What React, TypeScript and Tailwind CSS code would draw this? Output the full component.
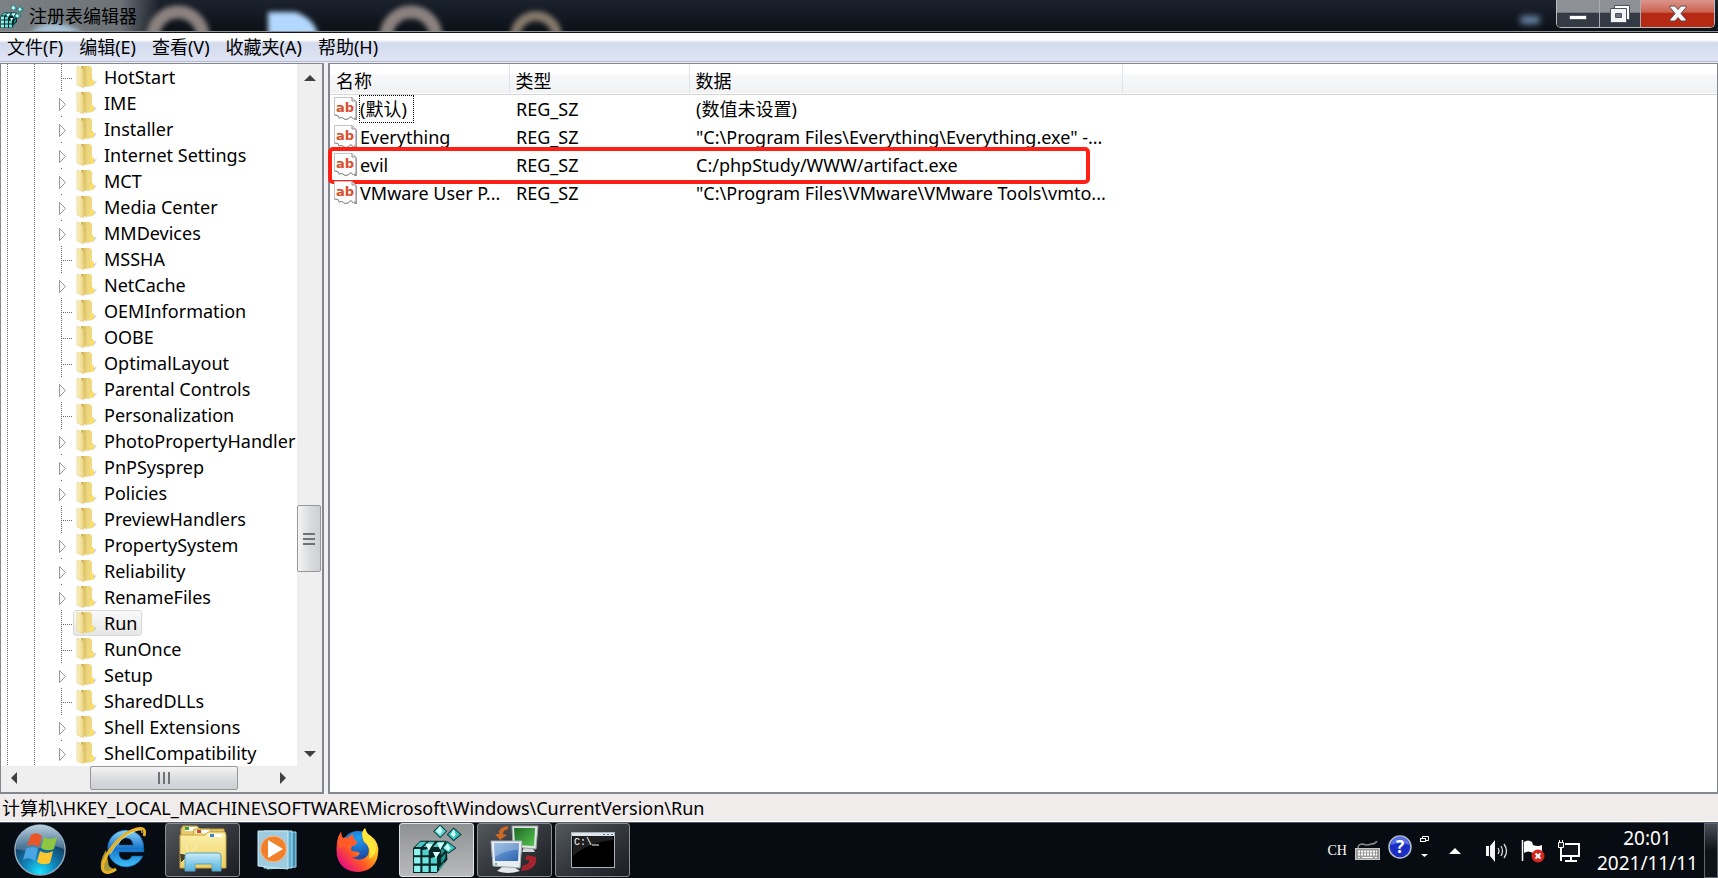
import React from "react";

const treeKeys: { name: string; expandable?: boolean; selected?: boolean }[] = [
  { name: "HotStart" },
  { name: "IME", expandable: true },
  { name: "Installer", expandable: true },
  { name: "Internet Settings", expandable: true },
  { name: "MCT", expandable: true },
  { name: "Media Center", expandable: true },
  { name: "MMDevices", expandable: true },
  { name: "MSSHA" },
  { name: "NetCache", expandable: true },
  { name: "OEMInformation" },
  { name: "OOBE" },
  { name: "OptimalLayout" },
  { name: "Parental Controls", expandable: true },
  { name: "Personalization" },
  { name: "PhotoPropertyHandler", expandable: true },
  { name: "PnPSysprep", expandable: true },
  { name: "Policies", expandable: true },
  { name: "PreviewHandlers" },
  { name: "PropertySystem", expandable: true },
  { name: "Reliability", expandable: true },
  { name: "RenameFiles", expandable: true },
  { name: "Run", selected: true },
  { name: "RunOnce" },
  { name: "Setup", expandable: true },
  { name: "SharedDLLs" },
  { name: "Shell Extensions", expandable: true },
  { name: "ShellCompatibility", expandable: true },
];

const values = [
  { name: "(默认)", type: "REG_SZ", data: "(数值未设置)", focused: true },
  { name: "Everything", type: "REG_SZ", data: '"C:\\Program Files\\Everything\\Everything.exe" -...' },
  { name: "evil", type: "REG_SZ", data: "C:/phpStudy/WWW/artifact.exe", marked: true },
  { name: "VMware User P...", type: "REG_SZ", data: '"C:\\Program Files\\VMware\\VMware Tools\\vmto...' },
];

const menus = ["文件(F)", "编辑(E)", "查看(V)", "收藏夹(A)", "帮助(H)"];

function RegeditIcon({ className }: { className?: string }) {
  return (
    <svg viewBox="0 0 48 48" className={className} aria-hidden="true">
      <path d="M1 22 L8 15 H33 L34 33 L24 46 H1 Z" fill="#042625" />
      {/* front face */}
      <path d="M2 23 H8 V29 H2 Z M2 31 H8 V37 H2 Z M2 39 H8 V45 H2 Z" fill="#8ff3ef" />
      <path d="M10 31 H16 V37 H10 Z M10 39 H16 V45 H10 Z M18 39 H24 V45 H18 Z" fill="#6fe4e0" />
      <path d="M10 24 L16 23 V29 H10 Z M18 32 L24 30 V37 H18 Z" fill="#53cfcc" />
      {/* top faces */}
      <path d="M3 21 L8 16 H14 L9 21 Z M11 21 L16 16 H22 L18 21 Z M20 21 L25 16 H32 L27 21 Z" fill="#49c6c3" />
      <path d="M13 18 H20 L16 25 Z M24 17 H31 L27 24 Z M20 26 H27 L23 32 Z" fill="#d4fffc" />
      {/* side faces */}
      <path d="M28 24 L32 19 V24 L28 29 Z M28 32 L32 27 V32 L28 37 Z M26 41 L31 35 V37 L26 44 Z" fill="#1e9a97" />
      <g stroke="#063f3f">
        <path d="M27 0 L33 6 L27 12 L21 6 Z" fill="#5cd6d3" />
        <path d="M40 3 L47 9 L40 15 L34 9 Z" fill="#3bbdbb" />
        <path d="M34 16 L42 22 L35 27 L29 22 Z" fill="#43c5c3" />
      </g>
      <path d="M27 1 L29 6 L27 9 L23 6 Z M40 4 L42 9 L40 12 L37 9 Z M34 18 L37 22 L35 25 L31 22 Z" fill="#cbfffc" />
    </svg>
  );
}

function FolderIcon() {
  return (
    <svg width="22" height="24" viewBox="0 0 22 24" className="shrink-0" aria-hidden="true">
      <defs>
        <linearGradient id="folderBack" x1="0" x2="1">
          <stop offset="0" stopColor="#cfae48" />
          <stop offset="0.5" stopColor="#ecd682" />
          <stop offset="1" stopColor="#f3dc7c" />
        </linearGradient>
        <linearGradient id="folderFront" x1="0" x2="1">
          <stop offset="0" stopColor="#fbf2c3" />
          <stop offset="1" stopColor="#ecd27c" />
        </linearGradient>
      </defs>
      <path d="M12 22 L21 15 L18 20 Z" fill="#9c9c9c" opacity="0.6" />
      <path d="M5 1 H14 L16 3 V14 L18 15 V20 L10 22 L6 20 Z" fill="url(#folderBack)" />
      <path d="M14 15 H18 V20 L14 21 Z" fill="#f9e06a" />
      <path d="M1 1 L7 4 L8 23 L1 20 Z" fill="url(#folderFront)" stroke="#e4cd80" strokeWidth="0.6" />
    </svg>
  );
}

function StringValueIcon() {
  return (
    <svg width="24" height="24" viewBox="0 0 24 24" className="shrink-0" aria-hidden="true">
      <path d="M19 1 L23 5 V23 H20 V20 Z" fill="#9a9a9a" />
      <path d="M0.5 0.5 H18 L21.5 4 V20 L19 22 L17 19.5 L14 22 L11 22.5 L8 20.5 L5 21 L4 18.5 L0.5 18 Z" fill="#fdfdfd" stroke="#c4c4c4" />
      <path d="M0.5 18 L4 18.5 L5 21 L8 20.5 L11 22.5 L14 22 L17 19.5 L19 22" fill="none" stroke="#8d8d8d" />
      <path d="M18 0.5 V4 H21.5" fill="none" stroke="#8d8d8d" />
      <text x="2" y="15" fontFamily="DejaVu Sans" fontWeight="700" fontSize="13" fill="#d9502e">
        ab
      </text>
    </svg>
  );
}

function TreeItem({ item }: { item: (typeof treeKeys)[number] }) {
  return (
    <li className="flex h-[26px] items-center whitespace-nowrap">
      <svg width="72" height="26" viewBox="0 0 72 26" className="shrink-0" aria-hidden="true">
        <path d="M6.5 0 V26 M33.5 0 V26" stroke="#666" strokeDasharray="1 1" />
        {item.expandable ? (
          <>
            <path d="M60.5 0 V1" stroke="#666" />
            <path d="M58.5 8.5 L64.5 14.5 L58.5 20.5 Z" fill="#fff" stroke="#969696" />
            <path d="M72 14.5 H76" stroke="#666" strokeDasharray="1 1" />
          </>
        ) : (
          <>
            <path d="M60.5 0 V26" stroke="#666" strokeDasharray="1 1" />
            <path d="M62 14.5 H72" stroke="#666" strokeDasharray="1 1" />
          </>
        )}
      </svg>
      <button
        className={
          item.selected
            ? "flex h-[26px] items-center gap-[6px] rounded-[3px] border border-[#d9d9d9] bg-linear-to-b from-[#fafafa] to-[#e6e6e6] pr-1 pl-[2px]"
            : "flex h-[26px] items-center gap-[6px] border border-transparent pr-1 pl-[2px]"
        }
      >
        <FolderIcon />
        <span>{item.name}</span>
      </button>
    </li>
  );
}

function ScrollArrow({ d, label, className }: { d: string; label: string; className: string }) {
  return (
    <button aria-label={label} className={`flex shrink-0 items-center justify-center ${className}`}>
      <svg width="12" height="12" viewBox="0 0 12 12" aria-hidden="true">
        <path d={d} fill="#404040" />
      </svg>
    </button>
  );
}

function TreePane() {
  return (
    <nav className="flex w-[324px] shrink-0 flex-col border-2 border-t border-l border-[#828790] bg-white">
      <div className="flex min-h-0 flex-1">
        <ul className="min-w-0 flex-1 overflow-hidden">
          {treeKeys.map((item) => (
            <TreeItem key={item.name} item={item} />
          ))}
        </ul>
        <div className="flex w-[25px] shrink-0 flex-col bg-[#efefef]">
          <ScrollArrow d="M0 9 L6 3 L12 9 Z" label="向上滚动" className="h-[28px]" />
          <div className="flex-[413]" />
          <div className="mr-px flex h-[67px] flex-col items-center justify-center gap-[3px] rounded-[2px] border border-[#979797] bg-linear-to-r from-[#f4f4f4] via-[#dcdde0] to-[#cfd0d4]">
            <span className="h-[2px] w-3 bg-[#6f7276]" />
            <span className="h-[2px] w-3 bg-[#6f7276]" />
            <span className="h-[2px] w-3 bg-[#6f7276]" />
          </div>
          <div className="flex-[169]" />
          <ScrollArrow d="M0 3 L6 9 L12 3 Z" label="向下滚动" className="h-[25px]" />
        </div>
      </div>
      <div className="flex h-[26px] shrink-0 bg-[#efefef] pr-[27px] pb-[2px]">
        <ScrollArrow d="M9 0 L3 6 L9 12 Z" label="向左滚动" className="w-[25px]" />
        <div className="flex-[64]" />
        <div className="flex w-[148px] items-center justify-center gap-[3px] rounded-[2px] border border-[#979797] bg-linear-to-b from-[#f4f4f4] via-[#dcdde0] to-[#cfd0d4]">
          <span className="h-3 w-[2px] bg-[#6f7276]" />
          <span className="h-3 w-[2px] bg-[#6f7276]" />
          <span className="h-3 w-[2px] bg-[#6f7276]" />
        </div>
        <div className="flex-[32]" />
        <ScrollArrow d="M3 0 L9 6 L3 12 Z" label="向右滚动" className="w-[25px]" />
      </div>
    </nav>
  );
}

function ValueList() {
  return (
    <main className="min-w-0 flex-1 border-2 border-t border-r border-[#828790] bg-white">
      <table className="w-full table-fixed border-collapse text-left">
        <colgroup>
          <col className="w-[179px]" />
          <col className="w-[180px]" />
          <col className="w-[433px]" />
          <col />
        </colgroup>
        <thead>
          <tr className="h-[30px] border-b border-[#d5d5d5] bg-linear-to-b from-white from-35% via-[#f7f8fa] via-37% to-[#f1f2f4]">
            <th className="border-r border-[#e0e3e8] pt-1 pl-[6px] font-normal">名称</th>
            <th className="border-r border-[#e0e3e8] pt-1 pl-[6px] font-normal">类型</th>
            <th className="border-r border-[#e0e3e8] pt-1 pl-[6px] font-normal">数据</th>
            <th aria-label="空白" />
          </tr>
        </thead>
        <tbody>
          {values.map((v) => (
            <tr key={v.name} className="relative h-[28px] whitespace-nowrap">
              <td className="p-0 pl-1">
                <div className="flex h-[28px] items-center gap-px">
                  <StringValueIcon />
                  <span
                    className={
                      v.focused
                        ? "border border-dotted border-black pr-[6px] leading-[26px]"
                        : "border border-transparent leading-[26px]"
                    }
                  >
                    {v.name}
                  </span>
                </div>
                {v.marked && (
                  <div className="absolute -top-1 -left-[2px] h-[37px] w-[762px] rounded-[5px] border-4 border-[#ff1f14]" />
                )}
              </td>
              <td className="p-0 pl-[7px]">{v.type}</td>
              <td className="p-0 pl-[7px]">{v.data}</td>
              <td />
            </tr>
          ))}
        </tbody>
      </table>
    </main>
  );
}

function TitleBar() {
  return (
    <header className="relative flex h-8 shrink-0 items-start overflow-hidden border-b border-[#8f9497] bg-linear-to-b from-[#1b222c] to-[#0c1118]">
      {/* Desktop showing through the glass frame */}
      <svg className="absolute top-0 left-0 h-8 w-[640px]" viewBox="0 0 640 32" aria-hidden="true">
        <defs>
          <filter id="glassBlur" x="-20%" y="-50%" width="140%" height="200%">
            <feGaussianBlur stdDeviation="2.5" />
          </filter>
          <linearGradient id="titleGlow" x1="0" x2="1">
            <stop offset="0" stopColor="#7b8184" />
            <stop offset="0.75" stopColor="#6c7276" />
            <stop offset="1" stopColor="#6f767d" stopOpacity="0" />
          </linearGradient>
        </defs>
        <rect width="160" height="32" fill="url(#titleGlow)" />
        <g filter="url(#glassBlur)">
          <path d="M30 34 Q50 12 84 34 Z" fill="#a9c6dc" />
          <circle cx="178" cy="37" r="25" fill="none" stroke="#8b8280" strokeWidth="13" />
          <circle cx="411" cy="37" r="25" fill="none" stroke="#8b8280" strokeWidth="13" />
          <circle cx="536" cy="37" r="21" fill="none" stroke="#84786a" strokeWidth="10" />
          <path d="M268 12 H296 Q316 20 318 36 H268 Z" fill="#b3d8ff" />
        </g>
      </svg>
      <div className="relative flex min-w-0 flex-1 items-center">
        <RegeditIcon className="mt-[2px] h-6 w-6 shrink-0" />
        <h1 className="ml-[5px] leading-8 text-black">注册表编辑器</h1>
      </div>
      <span className="relative mt-4 mr-4 h-2 w-5 rounded-full bg-[#6a88a8] blur-[3px]" />
      <div className="relative mr-[3px] flex h-[28px] overflow-hidden rounded-b-[5px] border border-t-0 border-[#b9bdc0]">
        <button
          aria-label="最小化"
          className="flex w-[43px] items-end justify-center border-r border-[#a8adb2] bg-linear-to-b from-[#8d9195] from-45% to-[#333a43] to-50% pb-[7px]"
        >
          <span className="h-[5px] w-[18px] border border-[#555b66] bg-white" />
        </button>
        <button
          aria-label="还原"
          className="flex w-[41px] items-center justify-center border-r border-[#a8adb2] bg-linear-to-b from-[#8d9195] from-45% to-[#333a43] to-50%"
        >
          <svg width="20" height="18" viewBox="0 0 20 18" aria-hidden="true">
            <path d="M4.5 0.5 H19.5 V14.5 H4.5 Z" fill="#fff" stroke="#4b5160" />
            <path d="M0.5 3.5 H16.5 V17.5 H0.5 Z M5.5 8.5 V12.5 H11.5 V8.5 Z" fill="#f4f4f4" stroke="#4b5160" fillRule="evenodd" />
            <path d="M6 9 H11 V12 H6 Z" fill="#6f747e" />
          </svg>
        </button>
        <button
          aria-label="关闭"
          className="flex w-[73px] items-center justify-center bg-linear-to-b from-[#dc8f85] from-5% via-[#c9614f] via-45% to-[#b62a14] to-50%"
        >
          <svg width="18" height="17" viewBox="0 0 18 17" aria-hidden="true">
            <path
              d="M1 1 H6 L9 4.5 L12 1 H17 V2.5 L12 8.5 L17 14.5 V16 H12 L9 12.5 L6 16 H1 V14.5 L6 8.5 L1 2.5 Z"
              fill="#f7f7f7"
              stroke="#5a4a55"
            />
          </svg>
        </button>
      </div>
    </header>
  );
}

function StartOrb() {
  return (
    <svg width="54" height="54" viewBox="0 0 54 54" aria-hidden="true">
      <defs>
        <radialGradient id="orb" cx="0.5" cy="0.95" r="0.9">
          <stop offset="0" stopColor="#19e4ff" />
          <stop offset="0.35" stopColor="#1287bd" />
          <stop offset="0.7" stopColor="#12466f" />
          <stop offset="1" stopColor="#3c6687" />
        </radialGradient>
        <linearGradient id="orbShine" x1="0" y1="0" x2="0" y2="1">
          <stop offset="0" stopColor="#c9dde9" stopOpacity="0.9" />
          <stop offset="1" stopColor="#7fa2ba" stopOpacity="0.4" />
        </linearGradient>
      </defs>
      <circle cx="27" cy="27" r="25" fill="url(#orb)" stroke="#8fa9ba" strokeWidth="1.5" />
      <path d="M3 26 A24 24 0 0 1 51 26 Q38 20 27 25 Q14 30 3 26 Z" fill="url(#orbShine)" />
      <path d="M18 12 Q23 8 29 13 L26 24 Q20 20 14 23 Z" fill="#e8562a" />
      <path d="M31 14 Q37 18 44 14 L41 26 Q34 29 28 25 Z" fill="#8ec63f" />
      <path d="M13 26 Q19 22 25 26 L22 38 Q16 33 10 37 Z" fill="#4aa5e4" />
      <path d="M27 28 Q33 32 40 28 L37 40 Q30 43 24 39 Z" fill="#fdc62f" />
    </svg>
  );
}

function IeIcon() {
  return (
    <svg width="50" height="50" viewBox="0 0 50 50" aria-hidden="true">
      <defs>
        <linearGradient id="ieBlue" x1="0" y1="0" x2="0" y2="1">
          <stop offset="0" stopColor="#8ed6fb" />
          <stop offset="0.5" stopColor="#1674c9" />
          <stop offset="1" stopColor="#3fc2fa" />
        </linearGradient>
      </defs>
      <path d="M8 25 Q0 38 4 46 Q9 50 18 44 Q10 44 10 36 Z" fill="#a8983c" />
      <path
        d="M28 5 A18.5 18.5 0 1 0 45 31 H34 Q32 35 28 35 Q21 35 21 27 H46 Q47 6 28 5 Z M21 20 Q22 13 28 13 Q34 13 35 20 Z"
        fill="url(#ieBlue)"
        stroke="#0d4f92"
        strokeWidth="0.6"
      />
      <path d="M46 11 Q49 1 38 4 Q22 9 10 28 Q1 44 7 47 Q11 49 18 44" fill="none" stroke="#eeb420" strokeWidth="2.8" />
      <path d="M44 8 Q45 3 37 6 Q22 12 12 29" fill="none" stroke="#ffe27a" strokeWidth="1" />
    </svg>
  );
}

function ExplorerIcon() {
  return (
    <svg width="50" height="50" viewBox="0 0 50 50" aria-hidden="true">
      <defs>
        <linearGradient id="exFront" x1="0" y1="0" x2="0" y2="1">
          <stop offset="0" stopColor="#fbf0ad" />
          <stop offset="1" stopColor="#ecd05f" />
        </linearGradient>
        <linearGradient id="exStand" x1="0" y1="0" x2="0" y2="1">
          <stop offset="0" stopColor="#c9ecf8" />
          <stop offset="1" stopColor="#52b2de" />
        </linearGradient>
      </defs>
      <path d="M5 1 H19 L22 4 H46 V42 H3 V4 Z" fill="#e6ca6b" stroke="#c59f3c" />
      <rect x="7" y="2" width="12" height="4" fill="#fff" />
      <rect x="7" y="2" width="4" height="3" fill="#35a443" />
      <path d="M16 4 H32 L34 7 H47 V20 H14 Z" fill="#f3df8c" stroke="#c59f3c" />
      <rect x="18" y="5" width="13" height="3" fill="#fff" />
      <rect x="19" y="5" width="4" height="3" fill="#d8402a" />
      <path d="M2 10 H27 L30 7 H47 L48 10 V43 H2 Z" fill="url(#exFront)" stroke="#c8a342" />
      <rect x="31" y="9" width="13" height="3" fill="#fff" />
      <rect x="32" y="9" width="4" height="3" fill="#3a85d0" />
      <path d="M3 38 L11 30 L2 28 M11 30 L8 20 M11 30 L20 20" stroke="#fffbe0" opacity="0.7" />
      <path d="M7 46 V31 Q7 28 10 28 H40 Q43 28 43 31 V46 H34 V39 H17 V46 Z" fill="url(#exStand)" stroke="#5aa2c2" />
    </svg>
  );
}

function MediaPlayerIcon() {
  return (
    <svg width="42" height="42" viewBox="0 0 42 42" aria-hidden="true">
      <path d="M10 3 H39 V38 L10 40 Z" fill="#3e91b5" stroke="#a9d8ec" />
      <path d="M7 2 H35 V39 H7 Z" fill="#5fb0d2" stroke="#b9e1f1" />
      <path d="M1 2 H31 V40 L1 37 Z" fill="#9dcbe0" stroke="#d0eaf5" />
      <circle cx="16.5" cy="20" r="13" fill="#f0802c" stroke="#f8c090" />
      <path d="M11 11 L26 20 L11 29 Z" fill="#fff" />
    </svg>
  );
}

function FirefoxIcon() {
  return (
    <svg width="46" height="46" viewBox="0 0 46 46" aria-hidden="true">
      <defs>
        <linearGradient id="foxBody" x1="0.9" y1="0.1" x2="0.15" y2="0.85">
          <stop offset="0" stopColor="#fff04a" />
          <stop offset="0.35" stopColor="#ffb01f" />
          <stop offset="0.65" stopColor="#ff5a22" />
          <stop offset="1" stopColor="#e8127c" />
        </linearGradient>
        <radialGradient id="foxGlobe" cx="0.5" cy="0.2" r="0.9">
          <stop offset="0" stopColor="#1ba1f5" />
          <stop offset="1" stopColor="#1d1d80" />
        </radialGradient>
      </defs>
      <circle cx="23" cy="21" r="17" fill="url(#foxGlobe)" />
      <path
        d="M6 5 Q6 9 8 11 Q11 10 13 11 Q14 9 18 7 Q17 11 22 15 Q22 18 17 19 Q15 22 17 24 Q21 24 25 26 Q23 31 17 30 Q26 36 33 28 Q36 20 29 15 Q25 6 30 1 Q31 6 36 9 Q45 16 43 27 Q41 43 24 45 Q6 45 2 29 Q0 13 6 5 Z"
        fill="url(#foxBody)"
      />
      <path d="M6 5 Q6 9 8 11 Q11 10 13 11 Q14 9 18 7 Q17 11 22 15 Q22 18 17 19 Q10 18 4 21 Q1 12 6 5 Z" fill="#ff5b2a" />
      <path d="M30 1 Q25 6 29 14 Q37 20 34 32 Q42 28 41 18 Q38 12 33 8 Q31 5 30 1 Z" fill="#ffe63a" />
    </svg>
  );
}

function VmwareIcon() {
  return (
    <svg width="50" height="50" viewBox="0 0 50 50" aria-hidden="true">
      <defs>
        <linearGradient id="vmBlue" x1="0" y1="0" x2="1" y2="1">
          <stop offset="0" stopColor="#7eabe0" />
          <stop offset="1" stopColor="#2d64ae" />
        </linearGradient>
        <linearGradient id="vmGreen" x1="0" y1="0" x2="1" y2="1">
          <stop offset="0" stopColor="#1e6a24" />
          <stop offset="1" stopColor="#56c450" />
        </linearGradient>
      </defs>
      <path d="M34 22 H42 L45 27 H32 Z" fill="#cfd6da" />
      <path d="M22 1 L48 1 L46 24 L23 22 Z" fill="#dfe5e4" stroke="#98a29f" />
      <path d="M24 3 L45 3 L44 21 L25 20 Z" fill="url(#vmGreen)" />
      <path d="M18 1 Q8 2 9 9 L5 9 L10 15 L17 10 L13 9 Q13 5 18 4 Z" fill="#c76827" />
      <path d="M37 30 L46 32 Q48 41 38 45 L31 46 L33 40 Q40 40 39 35 L35 35 Z" fill="#a5232d" />
      <path d="M12 42 H24 L30 46 Q18 50 7 46 Z" fill="#e2e8eb" />
      <path d="M1 16 L32 16 L30 43 L3 41 Z" fill="#e8edf2" stroke="#9eaab6" />
      <path d="M4 18 L29 18 L28 36 L5 36 Z" fill="url(#vmBlue)" />
      <path d="M4 18 L29 18 L28 25 Q15 25 5 32 Z" fill="#fff" opacity="0.25" />
      <circle cx="6" cy="39" r="1" fill="#39a845" />
    </svg>
  );
}

function CmdIcon() {
  return (
    <svg width="44" height="36" viewBox="0 0 44 36" aria-hidden="true">
      <rect x="0.5" y="0.5" width="43" height="35" fill="#000" stroke="#a9b1b9" />
      <rect x="1" y="1" width="42" height="3" fill="#dfe5ea" />
      <path d="M32 2.5 H34 M36 2.5 H38 M40 2.5 H42" stroke="#4b78b3" />
      <path d="M2 4 H42 V8 Q18 10 2 24 Z" fill="#fff" opacity="0.12" />
      <text x="3" y="13" fontFamily="Liberation Mono" fontSize="10" fill="#fff">
        C:\
      </text>
      <path d="M21 13 H28" stroke="#fff" />
    </svg>
  );
}

function Taskbar() {
  const running =
    "flex h-[54px] w-[75px] items-center justify-center rounded-[3px] border border-[#8b8f93] bg-linear-to-br from-[#54595d] via-[#34383c] to-[#1b1e22]";
  return (
    <footer className="flex h-[56px] shrink-0 items-start border-t border-[#4d5a68] bg-[#070c12] text-white">
      <div className="flex items-center">
        <button aria-label="开始" className="flex w-[80px] justify-center">
          <StartOrb />
        </button>
        <button aria-label="Internet Explorer" className="flex w-[85px] justify-center">
          <IeIcon />
        </button>
        <button aria-label="资源管理器" className={running}>
          <ExplorerIcon />
        </button>
        <button aria-label="Media Player" className="flex w-[76px] justify-center">
          <MediaPlayerIcon />
        </button>
        <button aria-label="Firefox" className="flex w-[83px] justify-center">
          <FirefoxIcon />
        </button>
        <div className="flex gap-[3px]">
          <button
            aria-label="注册表编辑器"
            className="flex h-[54px] w-[75px] items-center justify-center rounded-[3px] border border-[#e2e2e2] bg-linear-to-b from-[#8f9193] to-[#b9babb]"
          >
            <RegeditIcon className="h-[50px] w-[50px]" />
          </button>
          <button aria-label="VMware Tools" className={running}>
            <VmwareIcon />
          </button>
          <button aria-label="命令提示符" className={running}>
            <CmdIcon />
          </button>
        </div>
      </div>

      <div className="ml-auto flex h-full items-center">
        <button className="mr-2 font-['Liberation_Serif',serif] text-[14px]">CH</button>
        <button aria-label="键盘" className="mr-2">
          <svg width="25" height="20" viewBox="0 0 25 20" aria-hidden="true">
            <path d="M3 7 Q3 3 8 3 Q12 5 16 3 Q20 3 22 0" fill="none" stroke="#8a8a8a" strokeWidth="1.5" />
            <rect x="0.5" y="7.5" width="24" height="11" fill="#9a9a9a" stroke="#c8c8c8" />
            <path d="M3 10.5 H22 M3 13.5 H22" stroke="#fff" strokeWidth="2" strokeDasharray="2 1" />
            <path d="M3 16.5 H5 M7 16.5 H18 M20 16.5 H22" stroke="#fff" />
          </svg>
        </button>
        <button aria-label="帮助" className="mr-2 mb-2">
          <svg width="24" height="24" viewBox="0 0 24 24" aria-hidden="true">
            <circle cx="12" cy="12" r="11" fill="#1a2dc4" stroke="#b9bfc9" strokeWidth="1.5" />
            <path d="M3 10 A9 9 0 0 1 21 10 Q12 6 3 10 Z" fill="#6d8bf0" opacity="0.7" />
            <text x="12" y="18" textAnchor="middle" fontFamily="Noto Sans" fontWeight="700" fontSize="17" fill="#fff">
              ?
            </text>
          </svg>
        </button>
        <button aria-label="语言栏选项" className="mr-5 mb-2">
          <svg width="9" height="22" viewBox="0 0 9 22" aria-hidden="true">
            <path d="M2.5 3 V0.5 H8.5 V4.5 H6" fill="none" stroke="#fff" />
            <rect x="0.5" y="2.5" width="5" height="3" fill="none" stroke="#fff" />
            <path d="M1 18 H8 L4.5 21 Z" fill="#fff" />
          </svg>
        </button>
        <button aria-label="显示隐藏的图标" className="mr-6">
          <svg width="12" height="6" viewBox="0 0 12 6" aria-hidden="true">
            <path d="M0 6 L6 0 L12 6 Z" fill="#fff" />
          </svg>
        </button>
        <button aria-label="音量" className="mr-3">
          <svg width="24" height="22" viewBox="0 0 24 22" aria-hidden="true">
            <path d="M1 6 H4 V16 H1 Z M5 6 L10 0 V22 L5 16 Z" fill="#f4f4f4" />
            <path d="M13 8 Q15 11 13 14 M16 6 Q19 11 16 16 M19 4 Q24 11 19 18" fill="none" stroke="#dcdcdc" strokeWidth="1.3" />
          </svg>
        </button>
        <button aria-label="操作中心" className="mr-3">
          <svg width="24" height="24" viewBox="0 0 24 24" aria-hidden="true">
            <path d="M1.5 1 V22" stroke="#fff" strokeWidth="1.5" />
            <path d="M3 3 Q7 0 11 3 L12 6 Q17 8 21 6 V15 Q16 17 12 14 Q7 11 3 14 Z" fill="#fff" />
            <circle cx="17" cy="17" r="6.5" fill="#d7261e" />
            <path d="M14.5 14.5 L19.5 19.5 M19.5 14.5 L14.5 19.5" stroke="#fff" strokeWidth="2" />
          </svg>
        </button>
        <button aria-label="网络" className="mr-4">
          <svg width="24" height="24" viewBox="0 0 24 24" aria-hidden="true">
            <path d="M8 5 H22 V17 H5" fill="#10151b" stroke="#fff" strokeWidth="2" />
            <path d="M14 18 V21 M8 22 H20" stroke="#fff" strokeWidth="2" />
            <path d="M1.5 3.5 H6.5 V8.5 H1.5 Z M2.5 3 V1 M5.5 3 V1" fill="#222" stroke="#fff" />
            <path d="M4 9 V22" fill="none" stroke="#fff" strokeWidth="2" />
          </svg>
        </button>
        <button className="mr-[6px] flex flex-col items-center text-[19px] leading-[25px]">
          <span>20:01</span>
          <span>2021/11/11</span>
        </button>
        <button aria-label="显示桌面" className="h-full w-[14px] border border-[#5e656c] bg-linear-to-b from-[#4a5057] to-[#0e1319] to-50%" />
      </div>
    </footer>
  );
}

export default function App() {
  return (
    <div className="flex min-h-screen flex-col bg-[#f0ecec] font-['Noto_Sans','Noto_Sans_CJK_SC',sans-serif] text-[18px] leading-6 text-black">
      <TitleBar />
      <div className="flex h-[30px] shrink-0 items-center gap-4 border-t border-b border-t-[#141619] border-b-[#b5bace] bg-linear-to-b from-white to-[#dfe5f4] px-[7px] via-[#d3daed] from-25% via-35%">
        {menus.map((label) => (
          <button key={label} className="whitespace-nowrap">
            {label}
          </button>
        ))}
      </div>
      <div className="flex flex-1 gap-1 bg-[#f0f0f4] pt-px">
        <TreePane />
        <ValueList />
      </div>
      <div className="h-[28px] shrink-0 border-b border-white bg-[#f0ecec] px-[2px] leading-7">
        计算机\HKEY_LOCAL_MACHINE\SOFTWARE\Microsoft\Windows\CurrentVersion\Run
      </div>
      <Taskbar />
    </div>
  );
}
